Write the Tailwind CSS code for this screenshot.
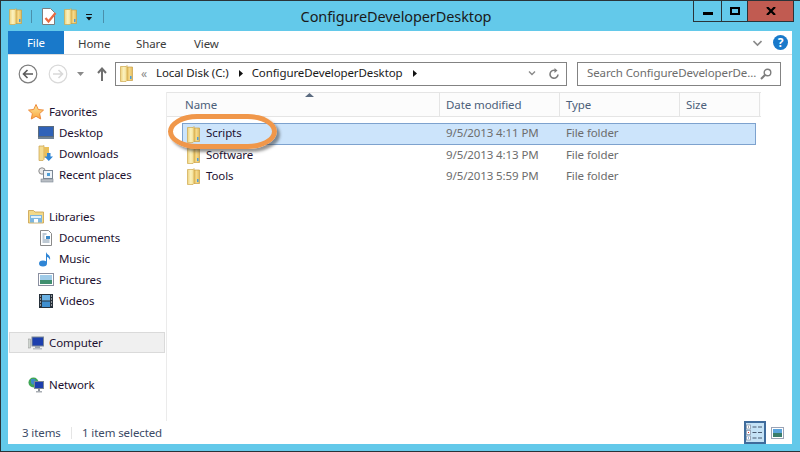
<!DOCTYPE html>
<html lang="en">
<head>
    <meta charset="UTF-8">
    <title>ConfigureDeveloperDesktop</title>
    <script src="https://cdn.jsdelivr.net/npm/@tailwindcss/browser@4"></script>
</head>
<body class="m-0 overflow-hidden">
    <svg width="0" height="0" class="absolute">
        <defs>
            <linearGradient id="fold" x1="0" y1="0" x2="1" y2="0">
                <stop offset="0" stop-color="#efd27c"/>
                <stop offset="0.5" stop-color="#fbf2c0"/>
                <stop offset="1" stop-color="#f3da8a"/>
            </linearGradient>
            <linearGradient id="foldback" x1="0" y1="0" x2="1" y2="0">
                <stop offset="0" stop-color="#e0b24c"/>
                <stop offset="0.5" stop-color="#f5d98a"/>
                <stop offset="1" stop-color="#e3bb5c"/>
            </linearGradient>
            <symbol id="folder" viewBox="0 0 13 17">
                <path d="M6.500 2h6v13.500h-6z" fill="url(#foldback)" stroke="#c99f45" stroke-width="0.700"/>
                <path d="M.5 1.500H6L7 .5v15l-1 1H.5z" fill="url(#fold)" stroke="#cfa94f" stroke-width="0.700"/>
                <rect x="10" y="11" width="1.500" height="3" fill="#4d9ed8"/>
            </symbol>
            <linearGradient id="star" x1="0" y1="0" x2="0" y2="1">
                <stop offset="0" stop-color="#fde9a0"/>
                <stop offset="1" stop-color="#f9a63c"/>
            </linearGradient>
        </defs>
    </svg>

    <div class="relative w-[800px] h-[452px] bg-[#63c9ea] border-t border-l border-b border-[#2a3338] flex flex-col text-[11.5px] tracking-[-0.1px] text-[#1c1030] [font-family:'Noto_Sans',sans-serif] overflow-hidden">

        <!-- Title bar -->
        <div class="h-[30px] shrink-0 flex relative">
            <div class="flex items-center pl-[8px] h-[30px]">
                <svg width="13" height="17"><use href="#folder"/></svg>
                <div class="w-px h-[13px] bg-[#4a8fab] ml-[9px] shrink-0"></div>
                <svg width="15" height="17" viewBox="0 0 15 17" class="ml-[10px]">
                    <path d="M.5 .5h8l4 4v12H.5z" fill="#fff" stroke="#7d7d7d"/>
                    <path d="M3.500 10l3 3.500 7-8.500" fill="none" stroke="#e8693f" stroke-width="2.200"/>
                </svg>
                <svg width="13" height="17" class="ml-[7px]"><use href="#folder"/></svg>
                <svg width="8" height="7" viewBox="0 0 8 7" class="ml-[8px] mt-[2px]">
                    <path d="M1 0h6v1H1z" fill="#111"/>
                    <path d="M1 3h6L4 6.500z" fill="#111"/>
                </svg>
                <div class="w-px h-[13px] bg-[#4a8fab] ml-[10px] shrink-0"></div>
            </div>
            <div class="flex-1 text-center text-[14.5px] leading-[31px] text-[#1a1a1a] pr-[5px]">ConfigureDeveloperDesktop</div>
            <div class="flex h-[21px] border-b border-l border-r border-[#2a3338] mr-[6px] text-black">
                <div class="w-[28px] flex items-center justify-center border-r border-[#2a3338]">
                    <div class="w-[10px] h-[3px] bg-black mt-[5px]"></div>
                </div>
                <div class="w-[26px] flex items-center justify-center border-r border-[#2a3338]">
                    <div class="w-[10px] h-[8px] border-2 border-black"></div>
                </div>
                <div class="w-[45px] flex items-center justify-center bg-[#c15b51]">
                    <svg width="10" height="8" viewBox="0 0 10 8"><path d="M1 0l8 8M9 0l-8 8" stroke="#000" stroke-width="2.200"/></svg>
                </div>
            </div>
        </div>

        <!-- Window body -->
        <div class="flex-1 ml-[7px] mr-[8px] mb-[7px] bg-white flex flex-col min-h-0">

            <!-- Ribbon tabs -->
            <div class="h-[24px] shrink-0 flex items-stretch border-b border-[#dadbdc]">
                <div class="w-[56px] bg-[#1979ca] text-white text-center leading-[23px]">File</div>
                <div class="ml-[14px] w-[30px] leading-[25px] text-[#3b3b3b]">Home</div>
                <div class="ml-[28px] w-[29px] leading-[25px] text-[#3b3b3b]">Share</div>
                <div class="ml-[29px] leading-[25px] text-[#3b3b3b]">View</div>
                <div class="flex-1"></div>
                <svg width="9" height="7" viewBox="0 0 9 7" class="self-center mr-[11px] mt-[1px]"><path d="M.5 1l4 4 4-4" fill="none" stroke="#8a8a8a" stroke-width="1.600"/></svg>
                <div class="w-[15px] h-[15px] rounded-full bg-[#1979ca] text-white text-[12px] font-bold text-center leading-[15px] self-center mr-[4px]">?</div>
            </div>

            <!-- Address row -->
            <div class="h-[37px] shrink-0 flex items-center">
                <svg width="20" height="20" viewBox="0 0 20 20" class="ml-[10px]">
                    <circle cx="10" cy="10" r="8.800" fill="#fff" stroke="#7d7d7d" stroke-width="1.200"/>
                    <path d="M15 10H6M9.500 6L5.500 10l4 4" fill="none" stroke="#5a5a5a" stroke-width="1.600"/>
                </svg>
                <svg width="20" height="20" viewBox="0 0 20 20" class="ml-[10px]">
                    <circle cx="10" cy="10" r="8.800" fill="#fff" stroke="#d9d9d9" stroke-width="1.200"/>
                    <path d="M5 10h9M10.500 6l4 4-4 4" fill="none" stroke="#d9d9d9" stroke-width="1.600"/>
                </svg>
                <svg width="7" height="4" viewBox="0 0 7 4" class="ml-[9px]"><path d="M0 0h7L3.500 4z" fill="#8a8a8a"/></svg>
                <svg width="10" height="14" viewBox="0 0 10 14" class="ml-[13px]"><path d="M5 14V2M1 6l4-4.500L9 6" fill="none" stroke="#6f6f6f" stroke-width="2"/></svg>
                <div class="ml-[8px] w-[452px] h-[24px] border border-[#838383] flex items-center">
                    <svg width="13" height="17" class="ml-[4px]"><use href="#folder"/></svg>
                    <span class="ml-[8px] w-[7px] text-[#8a8a8a] text-[12px] leading-none">«</span>
                    <span class="ml-[8px] pb-[2px] text-[#1a1a1a]">Local Disk (C:)</span>
                    <svg width="4" height="7" viewBox="0 0 4 7" class="ml-[10px]"><path d="M0 0l4 3.500L0 7z" fill="#111"/></svg>
                    <span class="ml-[9px] pb-[2px] text-[#1a1a1a]">ConfigureDeveloperDesktop</span>
                    <svg width="4" height="7" viewBox="0 0 4 7" class="ml-[10px]"><path d="M0 0l4 3.500L0 7z" fill="#111"/></svg>
                    <div class="flex-1"></div>
                    <svg width="8" height="5" viewBox="0 0 8 5" class="mr-[12px]"><path d="M1 .5l3 3 3-3" fill="none" stroke="#8a8a8a" stroke-width="1.400"/></svg>
                    <svg width="12" height="12" viewBox="0 0 12 12" class="mr-[6px]"><path d="M10 6.500A4 4 0 1 1 7.500 2.500" fill="none" stroke="#7d7d7d" stroke-width="1.600"/><path d="M6.500 0l3 2.500-3 2.500z" fill="#7d7d7d"/></svg>
                </div>
                <div class="ml-[10px] w-[204px] h-[24px] border border-[#838383] flex items-center pl-[9px] text-[#6d6d6d] whitespace-nowrap">
                    <span class="w-[169px] pb-[2px]">Search ConfigureDeveloperDe...</span>
                    <svg width="12" height="12" viewBox="0 0 12 12" class="ml-[4px]"><circle cx="7.500" cy="4.500" r="3.300" fill="none" stroke="#7d7d7d" stroke-width="1.400"/><path d="M5 7l-4 4" stroke="#7d7d7d" stroke-width="2"/></svg>
                </div>
            </div>

            <!-- Main area -->
            <div class="flex-1 flex min-h-0">

                <!-- Navigation pane -->
                <div class="w-[159px] shrink-0 border-r border-[#ebebeb] pt-[9px] pl-[1px] pr-px">
                    <div class="h-[21px] flex items-center pl-[19px]">
                        <svg width="16" height="16" viewBox="0 0 16 16"><path d="M8 .5l2.300 5 5.200.6-3.900 3.500 1.100 5.400L8 12.300 3.300 15l1.100-5.400L.5 6.100l5.200-.6z" fill="url(#star)" stroke="#ee8a3a"/></svg>
                        <span class="ml-[5px]">Favorites</span>
                    </div>
                    <div class="h-[21px] flex items-center pl-[29px]">
                        <svg width="16" height="13" viewBox="0 0 16 13"><rect x=".5" y=".5" width="15" height="10" fill="#2f62b8" stroke="#5a6b7d"/><rect x="0" y="11" width="16" height="2" fill="#6f8294"/></svg>
                        <span class="ml-[5px]">Desktop</span>
                    </div>
                    <div class="h-[21px] flex items-center pl-[29px]">
                        <svg width="16" height="17" viewBox="0 0 16 17"><path d="M1 1h4l1-.5v14l-1 1H1z" fill="#f4dc91" stroke="#c9a04a" stroke-width=".7"/><path d="M6 2h5v11H6z" fill="#e9bf5c"/><path d="M9 8h3.500v3.500H15L10.800 16 6.500 11.500H9z" fill="#2f85d5"/></svg>
                        <span class="ml-[5px]">Downloads</span>
                    </div>
                    <div class="h-[21px] flex items-center pl-[29px]">
                        <svg width="16" height="16" viewBox="0 0 16 16"><circle cx="4" cy="4" r="3.200" fill="#e8e8e8" stroke="#8a8a8a"/><rect x="5.500" y="3.500" width="9" height="8" fill="#eef3f8" stroke="#7b8794"/><rect x="9" y="6" width="3" height="3" fill="#4d9ed8"/><rect x="3" y="12" width="12" height="3" fill="#b9bec4" stroke="#7b8794" stroke-width=".6"/></svg>
                        <span class="ml-[5px]">Recent places</span>
                    </div>

                    <div class="h-[21px] mt-[21px] flex items-center pl-[19px]">
                        <svg width="16" height="15" viewBox="0 0 16 15"><path d="M.5 1.500h5l1.500 1.500h8.500v11H.5z" fill="#f2d98a" stroke="#c9a04a" stroke-width=".8"/><rect x="2" y="6" width="12" height="7.500" fill="#7cb6e0"/><rect x="3" y="7" width="10" height="2" fill="#e0f0fa"/><rect x="6" y="10" width="4" height="3.500" fill="#fff"/></svg>
                        <span class="ml-[5px]">Libraries</span>
                    </div>
                    <div class="h-[21px] flex items-center pl-[29px]">
                        <svg width="16" height="16" viewBox="0 0 16 16"><path d="M2.500.5h8l3 3v12h-11z" fill="#fff" stroke="#8a8a8a"/><path d="M4.500 4h4M4.500 6h2M4.500 8h2M4.500 10h7M4.500 12h7" stroke="#7d93a8"/><rect x="8" y="6" width="4" height="3" fill="#3d8ac8"/></svg>
                        <span class="ml-[5px]">Documents</span>
                    </div>
                    <div class="h-[21px] flex items-center pl-[29px]">
                        <svg width="16" height="16" viewBox="0 0 16 16"><ellipse cx="5" cy="12.500" rx="4" ry="3" fill="#2f85d5"/><path d="M8 12V1c1 3 5 3 4 8-.8-2-2-3-3-3v6z" fill="#2f85d5"/></svg>
                        <span class="ml-[5px]">Music</span>
                    </div>
                    <div class="h-[21px] flex items-center pl-[29px]">
                        <svg width="16" height="13" viewBox="0 0 16 13"><rect x=".5" y=".5" width="15" height="12" fill="#fff" stroke="#8a8fa0"/><rect x="2" y="2" width="12" height="5" fill="#9fcbe8"/><rect x="2" y="7" width="12" height="4" fill="#3f8f6f"/></svg>
                        <span class="ml-[5px]">Pictures</span>
                    </div>
                    <div class="h-[21px] flex items-center pl-[29px]">
                        <svg width="16" height="16" viewBox="0 0 16 16"><rect x="1" y="1" width="14" height="14" fill="#26303a"/><rect x="4" y="2" width="8" height="5.500" fill="#6bb2e4"/><rect x="4" y="8.500" width="8" height="5.500" fill="#3f8fd0"/><path d="M2 3h1M2 6h1M2 9h1M2 12h1M13 3h1M13 6h1M13 9h1M13 12h1" stroke="#fff"/></svg>
                        <span class="ml-[5px]">Videos</span>
                    </div>

                    <div class="h-[21px] mt-[21px] flex items-center pl-[18px] bg-[#f0f0f0] border border-[#dadada]">
                        <svg width="16" height="14" viewBox="0 0 16 14"><rect x="0" y="3" width="2.500" height="9" fill="#cfd5d0" stroke="#8a8a8a" stroke-width=".5"/><rect x="4" y="1" width="11.500" height="9" fill="#1c3fae" stroke="#7b8794"/><rect x="7" y="10" width="5" height="2" fill="#9aa3ad"/><rect x="5" y="12" width="9" height="1.500" fill="#b9bec4"/></svg>
                        <span class="ml-[5px]">Computer</span>
                    </div>

                    <div class="h-[21px] mt-[21px] flex items-center pl-[19px]">
                        <svg width="16" height="16" viewBox="0 0 16 16"><circle cx="5.500" cy="5.500" r="5" fill="#3fa655"/><path d="M3 2h4l1 3-3 3-2-2z" fill="#3d8ac8"/><rect x="6.500" y="4.500" width="9" height="7" fill="#1c3fae" stroke="#7b8794"/><rect x="10" y="12" width="2" height="2" fill="#8a8f96"/><rect x="8" y="14" width="6" height="1.500" fill="#a9aeb4"/></svg>
                        <span class="ml-[5px]">Network</span>
                    </div>
                </div>

                <!-- File list -->
                <div class="flex-1 min-w-0">
                    <div class="relative h-[25px] w-[594px] flex bg-[#fcfcfc] border-t border-b border-[#e5e5e5] text-[#4c607a]">
                        <svg width="9" height="4" viewBox="0 0 9 4" class="absolute left-[138px] top-0"><path d="M0 4l4.500-4L9 4z" fill="#5b6b80"/></svg>
                        <div class="w-[273px] pl-[18px] leading-[23px] border-r border-[#e5e5e5]">Name</div>
                        <div class="w-[120px] pl-[6px] leading-[23px] border-r border-[#e5e5e5]">Date modified</div>
                        <div class="w-[120px] pl-[6px] leading-[23px] border-r border-[#e5e5e5]">Type</div>
                        <div class="w-[80px] pl-[6px] leading-[23px] border-r border-[#e5e5e5]">Size</div>
                    </div>
                    <div class="pt-[6px]">
                        <div class="h-[22px] ml-[15px] w-[574px] flex items-center bg-[#cce4fb] border border-[#7da2ce]">
                            <svg width="13" height="17" class="ml-[4px]"><use href="#folder"/></svg>
                            <span class="ml-[6px] w-[240px] pb-[2px]">Scripts</span>
                            <span class="w-[120px] pb-[2px] text-[#6d6d6d]">9/5/2013 4:11 PM</span>
                            <span class="pb-[2px] text-[#6d6d6d]">File folder</span>
                        </div>
                        <div class="h-[21px] ml-[15px] w-[574px] flex items-center px-px">
                            <svg width="13" height="17" class="ml-[4px]"><use href="#folder"/></svg>
                            <span class="ml-[6px] w-[240px] pb-[2px]">Software</span>
                            <span class="w-[120px] pb-[2px] text-[#6d6d6d]">9/5/2013 4:13 PM</span>
                            <span class="pb-[2px] text-[#6d6d6d]">File folder</span>
                        </div>
                        <div class="h-[21px] ml-[15px] w-[574px] flex items-center px-px">
                            <svg width="13" height="17" class="ml-[4px]"><use href="#folder"/></svg>
                            <span class="ml-[6px] w-[240px] pb-[2px]">Tools</span>
                            <span class="w-[120px] pb-[2px] text-[#6d6d6d]">9/5/2013 5:59 PM</span>
                            <span class="pb-[2px] text-[#6d6d6d]">File folder</span>
                        </div>
                    </div>
                </div>
            </div>

            <!-- Status bar -->
            <div class="h-[23px] shrink-0 flex items-center text-[#3b4a66] relative whitespace-nowrap">
                <span class="ml-[14px] w-[38px]">3 items</span>
                <div class="w-px h-[12px] bg-[#e5e5e5] ml-[11px]"></div>
                <span class="ml-[10px]">1 item selected</span>
                <div class="flex-1"></div>
                <div class="w-[22px] h-[23px] bg-[#c5e3f6] border-2 border-[#3f6c9c] flex items-center justify-center">
                    <svg width="18" height="17" viewBox="0 0 18 17">
                        <rect x=".5" y="1" width="4" height="4" fill="#fff" stroke="#8a96a8" stroke-width=".8"/>
                        <rect x=".5" y="6.500" width="4" height="4" fill="#fff" stroke="#8a96a8" stroke-width=".8"/>
                        <rect x=".5" y="12" width="4" height="4" fill="#fff" stroke="#8a96a8" stroke-width=".8"/>
                        <rect x="2" y="2.500" width="1" height="1" fill="#4a5a70"/>
                        <rect x="2" y="8" width="1" height="1" fill="#d9342f"/>
                        <rect x="2" y="13.500" width="1" height="1" fill="#2f6fc0"/>
                        <path d="M6.500 3h4M12 3h4M6.500 8.500h4M12 8.500h4M6.500 14h4M12 14h4" stroke="#4a5a70"/>
                    </svg>
                </div>
                <svg width="13" height="12" viewBox="0 0 13 12" class="ml-[5px] mr-[8px]"><rect x=".5" y=".5" width="12" height="11" fill="#fff" stroke="#9aa3b5"/><rect x="2" y="2" width="9" height="4" fill="#5aa4dc"/><rect x="2" y="6" width="9" height="4" fill="#3a7d6a"/></svg>
            </div>
        </div>

        <!-- Orange callout round the Scripts row -->
        <div class="absolute left-[167px] top-[113px] w-[109px] h-[35px] rounded-[30px/18px] border-[5px] border-[#f0974a] shadow-[3px_3px_3px_rgba(60,60,60,0.55)]"></div>
    </div>
</body>
</html>
